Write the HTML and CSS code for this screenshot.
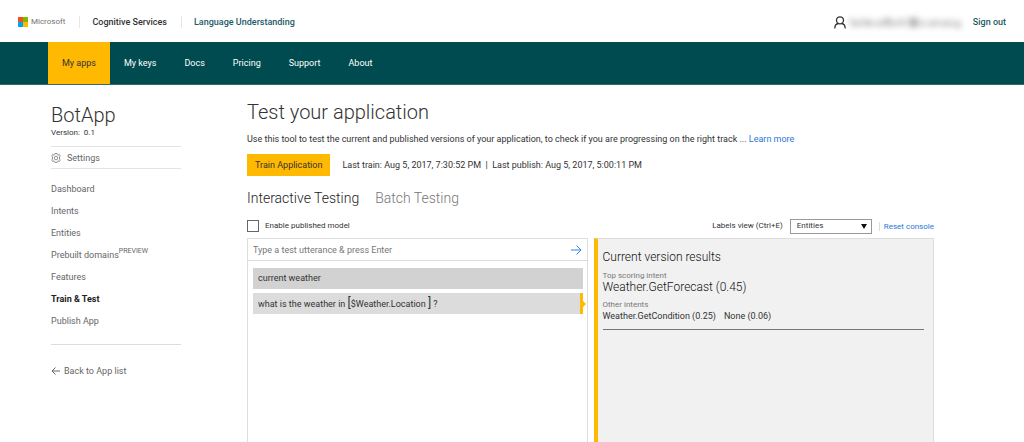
FILE: index.html
```html
<!DOCTYPE html>
<html lang="en">
<head>
  <meta charset="UTF-8">
  <meta name="viewport" content="width=device-width, initial-scale=1.0">
  <title>Language Understanding - Train &amp; Test</title>
  <link rel="stylesheet" href="styles.css">
</head>
<body>
  <header class="top-bar">
    <a href="#" class="logo">
      <svg width="10" height="10" viewBox="0 0 10 10" aria-hidden="true">
        <rect width="5" height="5" fill="#f25022"/>
        <rect x="5" width="5" height="5" fill="#7fba00"/>
        <rect y="5" width="5" height="5" fill="#00a4ef"/>
        <rect x="5" y="5" width="5" height="5" fill="#ffb900"/>
      </svg>
      <span>Microsoft</span>
    </a>
    <a href="#" class="brand">Cognitive Services</a>
    <a href="#" class="brand product">Language Understanding</a>
    <div class="account">
      <svg width="12" height="13" viewBox="0 0 12 13" fill="none" stroke="#333" stroke-width="1.3" aria-hidden="true">
        <circle cx="6" cy="4.3" r="3.5"/>
        <path d="M.8 12.5c0-3 1.6-4.7 3.6-5M11.2 12.5c0-3-1.6-4.7-3.6-5"/>
      </svg>
      <!-- masked account name -->
      <svg class="masked" width="114" height="12" viewBox="0 0 114 12" fill="#888" aria-hidden="true">
        <path d="M1 2h2v8H1zM5 5h5v5H5zM12 3h2v7h-2zM16 4h5v6h-5zM23 5h3v5h-3zM29 5h5v5h-5zM36 2h5v8h-5zM43 5h4v5h-4zM49 3h2v7h-2zM53 3h3v7h-3zM60 2h9v9h-9zM72 5h4v5h-4zM80 5h5v5h-5zM87 4h3v6h-3zM93 5h5v5h-5zM100 5h4v5h-4zM107 5h4v7h-4z"/>
      </svg>
      <a href="#" class="sign-out">Sign out</a>
    </div>
  </header>

  <nav class="main-nav">
    <a href="#" class="active">My apps</a>
    <a href="#">My keys</a>
    <a href="#">Docs</a>
    <a href="#">Pricing</a>
    <a href="#">Support</a>
    <a href="#">About</a>
  </nav>

  <div class="page">
    <aside class="sidebar">
      <h2>BotApp</h2>
      <p class="version">Version:&nbsp; 0.1</p>
      <a href="#" class="settings">
        <svg width="10" height="10" viewBox="0 0 20 20" fill="none" stroke="#777" stroke-width="1.6" aria-hidden="true">
          <path d="M8 1h4l.6 2.3 2 .9 2.1-1.2 1.8 3-1.5 1.9v4.2l1.5 1.9-1.8 3-2.1-1.2-2 .9L12 19H8l-.6-2.3-2-.9L3.300 17l-1.800-3L3 12.100V7.900L1.500 6l1.800-3 2.100 1.200 2-.9z"/>
          <circle cx="10" cy="10" r="3.500"/>
        </svg>
        <span>Settings</span>
      </a>
      <ul class="side-menu">
        <li><a href="#">Dashboard</a></li>
        <li><a href="#">Intents</a></li>
        <li><a href="#">Entities</a></li>
        <li><a href="#">Prebuilt domains<span class="tag">PREVIEW</span></a></li>
        <li><a href="#">Features</a></li>
        <li><a href="#" class="current">Train &amp; Test</a></li>
        <li><a href="#">Publish App</a></li>
      </ul>
      <a href="#" class="back">
        <svg width="9" height="8" viewBox="0 0 9 8" fill="none" stroke="#666" aria-hidden="true">
          <path d="M9 4H1M4.500.5L1 4l3.500 3.500"/>
        </svg>
        <span>Back to App list</span>
      </a>
    </aside>

    <main class="content">
      <h1>Test your application</h1>
      <p class="intro">Use this tool to test the current and published versions of your application, to check if you are progressing on the right track ... <a href="#">Learn more</a></p>
      <div class="train">
        <button type="button" class="train-btn">Train Application</button>
        <span>Last train: Aug 5, 2017, 7:30:52 PM&nbsp; |&nbsp; Last publish: Aug 5, 2017, 5:00:11 PM</span>
      </div>
      <div class="tabs">
        <a href="#" class="selected">Interactive Testing</a>
        <a href="#">Batch Testing</a>
      </div>
      <div class="options">
        <input type="checkbox" id="published">
        <label for="published">Enable published model</label>
        <label for="labels-view" class="view-label">Labels view (Ctrl+E)</label>
        <div class="select-box">
          <select id="labels-view">
            <option>Entities</option>
            <option>Tokens</option>
          </select>
        </div>
        <a href="#" class="reset">Reset console</a>
      </div>
      <div class="panels">
        <section class="console">
          <form class="utterance">
            <input type="text" aria-label="Test utterance" placeholder="Type a test utterance &amp; press Enter">
            <button type="button" aria-label="Submit">
              <svg width="11" height="10" viewBox="0 0 11 10" fill="none" stroke="#2b88e8" aria-hidden="true">
                <path d="M0 5h10M5.500.5L10 5 5.500 9.500"/>
              </svg>
            </button>
          </form>
          <ul class="history">
            <li>current weather</li>
            <li class="picked">what is the weather in <b>[</b>$Weather.Location <b>]</b> ?</li>
          </ul>
        </section>
        <section class="results">
          <h3>Current version results</h3>
          <h4>Top scoring intent</h4>
          <p class="top-intent">Weather.GetForecast (0.45)</p>
          <h4>Other intents</h4>
          <p class="other-intents"><span>Weather.GetCondition (0.25)</span><span>None (0.06)</span></p>
        </section>
      </div>
    </main>
  </div>
</body>
</html>
```
FILE: styles.css
```css
* {
  box-sizing: border-box;
}
body {
  font-family: Roboto, "Open Sans", sans-serif;
  font-size: 9px;
  line-height: 12px;
  margin: 0;
  min-height: 100vh;
  display: flex;
  flex-direction: column;
  background-color: #fff;
  color: #333;
}
h1, h2, h3, h4, p, ul {
  margin: 0;
  padding: 0;
  font-weight: 400;
}
ul {
  list-style: none;
}
a {
  color: inherit;
  text-decoration: none;
}
button, input, select {
  font: inherit;
  color: inherit;
}
svg {
  flex: none;
}

/* top bar */
.top-bar {
  display: flex;
  align-items: center;
  height: 42px;
  padding: 2px 18px 0;
}
.logo {
  display: flex;
  align-items: center;
  gap: 3px;
  padding-right: 14px;
  font-size: 8px;
  color: #737373;
}
.brand {
  padding: 0 14px 0 12px;
  border-left: 1px solid #e6e6e6;
  font-weight: 500;
}
.product, .sign-out {
  color: #1c5a66;
}
.account {
  display: flex;
  align-items: center;
  margin-left: auto;
}
.masked {
  margin: 0 10px 0 3px;
  filter: blur(3px);
  opacity: 0.7;
}
.sign-out {
  font-weight: 500;
}

/* main navigation */
.main-nav {
  display: flex;
  height: 43px;
  padding-left: 48px;
  background-color: #004b50;
  border-bottom: 1px solid #2f6d71;
  color: #fff;
  line-height: 43px;
}
.main-nav a {
  padding: 0 14px;
}
.main-nav .active {
  background-color: #ffb900;
  color: #333;
}

.page {
  flex: 1;
  display: flex;
  gap: 66px;
  padding: 0 90px 0 51px;
}

/* sidebar */
.sidebar {
  width: 130px;
  padding-top: 18px;
  color: #666;
}
.sidebar h2 {
  font-size: 20px;
  font-weight: 300;
  line-height: 24px;
  color: #333;
}
.version {
  font-size: 8px;
  line-height: 11px;
  color: #333;
}
.settings {
  display: flex;
  align-items: center;
  gap: 6px;
  height: 23px;
  margin: 8px 0 9px;
  border-top: 1px solid #e3e3e3;
  border-bottom: 1px solid #e3e3e3;
}
.side-menu {
  padding-bottom: 12px;
  border-bottom: 1px solid #ddd;
  line-height: 22px;
}
.side-menu .current {
  font-weight: 700;
  color: #222;
}
.tag {
  font-size: 7px;
  line-height: 1;
  vertical-align: 5px;
}
.back {
  display: flex;
  align-items: center;
  gap: 4px;
  margin-top: 20px;
}

/* content */
.content {
  flex: 1;
  display: flex;
  flex-direction: column;
  padding-top: 15px;
}
.content h1 {
  font-size: 20px;
  font-weight: 300;
  line-height: 24px;
}
.intro {
  margin-top: 9px;
}
.intro a, .reset {
  color: #2b78d8;
}
.train {
  display: flex;
  align-items: center;
  gap: 12px;
  margin-top: 9px;
}
.train-btn {
  height: 22px;
  padding: 0 8px;
  border: 0;
  background-color: #ffb900;
}
.tabs {
  display: flex;
  gap: 16px;
  margin-top: 12px;
  font-size: 14px;
  font-weight: 300;
  line-height: 20px;
  color: #777;
}
.tabs .selected {
  color: #222;
}
.options {
  display: flex;
  align-items: center;
  height: 16px;
  margin: 10px 0 4px;
  font-size: 8px;
}
.options input {
  appearance: none;
  width: 12px;
  height: 12px;
  margin: 0 6px 0 0;
  border: 1px solid #666;
}
.view-label {
  margin-left: auto;
}
.select-box {
  position: relative;
  margin: 0 7px;
}
.select-box::after {
  content: "";
  position: absolute;
  right: 5px;
  top: 5px;
  border: 3px solid transparent;
  border-top: 5px solid #111;
  border-bottom: 0;
}
.select-box select {
  appearance: none;
  display: block;
  width: 82px;
  height: 15px;
  padding: 0 6px;
  border: 1px solid #999;
  border-radius: 0;
  background-color: #fff;
}
.reset {
  padding-left: 4px;
  border-left: 1px solid #ddd;
  line-height: 9px;
}
.panels {
  flex: 1;
  display: grid;
  grid-template-columns: 1fr 1fr;
  gap: 6px;
}
.console {
  border: 1px solid #ddd;
  border-bottom: 0;
}
.utterance {
  display: flex;
  align-items: center;
  height: 22px;
  padding: 0 5px;
  border-bottom: 1px solid #ddd;
}
.utterance input {
  flex: 1;
  padding: 0;
  border: 0;
  outline: 0;
}
.utterance input::placeholder {
  color: #777;
}
.utterance button {
  display: flex;
  padding: 0;
  border: 0;
  background: none;
}
.history {
  display: flex;
  flex-direction: column;
  gap: 4px;
  padding: 7px 4px 7px 5px;
}
.history li {
  height: 21px;
  padding: 0 5px;
  background-color: #d2d2d2;
  line-height: 21px;
}
.history .picked {
  position: relative;
  background-color: #dcdcdc;
  border-right: 3px solid #ffb900;
}
.picked::after {
  content: "";
  position: absolute;
  right: -6px;
  top: 8px;
  border: 3px solid transparent;
  border-left-color: #ffb900;
  border-right: 0;
}
.picked b {
  font-size: 12px;
  font-weight: 400;
}
.results {
  padding: 10px 9px 0 5px;
  border: 1px solid #ddd;
  border-left: 4px solid #ffb900;
  border-bottom: 0;
  background-color: #f1f1f1;
}
.results h3 {
  font-size: 12px;
  font-weight: 300;
  line-height: 16px;
  color: #111;
}
.results h4 {
  margin-top: 5px;
  font-size: 8px;
  line-height: 11px;
  color: #777;
}
.top-intent {
  font-size: 12px;
  font-weight: 300;
  line-height: 13px;
  color: #111;
}
.other-intents {
  display: flex;
  gap: 8px;
  padding-bottom: 7px;
  border-bottom: 1px solid #777;
}
```
